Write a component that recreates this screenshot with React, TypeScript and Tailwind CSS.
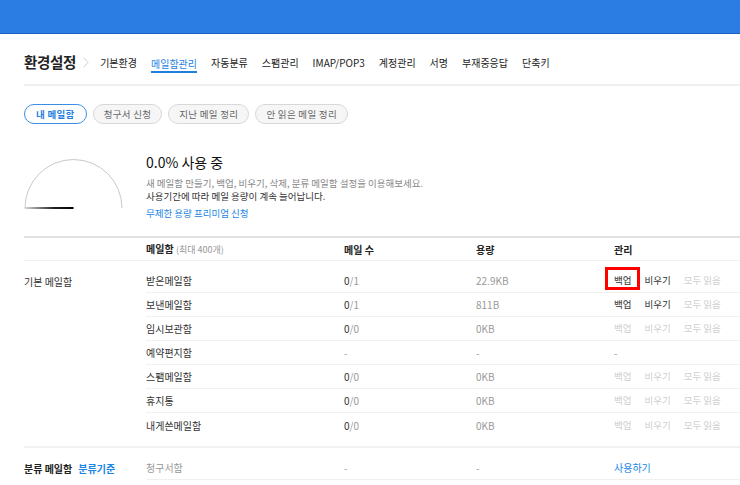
import React from 'react'

const font = { fontFamily: '"Noto Sans CJK KR", "Noto Sans", sans-serif' }

const navItems = ['기본환경', '메일함관리', '자동분류', '스팸관리', 'IMAP/POP3', '계정관리', '서명', '부재중응답', '단축키']
const pills = ['내 메일함', '청구서 신청', '지난 메일 정리', '안 읽은 메일 정리']

interface Box {
  name: string
  read: string
  total: string
  size: string
  state: 'on' | 'off' | 'none'
}

const boxes: Box[] = [
  { name: '받은메일함', read: '0', total: '/1', size: '22.9KB', state: 'on' },
  { name: '보낸메일함', read: '0', total: '/1', size: '811B', state: 'on' },
  { name: '임시보관함', read: '0', total: '/0', size: '0KB', state: 'off' },
  { name: '예약편지함', read: '-', total: '', size: '-', state: 'none' },
  { name: '스팸메일함', read: '0', total: '/0', size: '0KB', state: 'off' },
  { name: '휴지통', read: '0', total: '/0', size: '0KB', state: 'off' },
  { name: '내게쓴메일함', read: '0', total: '/0', size: '0KB', state: 'off' },
]

const Gauge = () => (
  <svg width="100" height="52" viewBox="0 0 100 52">
    <defs>
      <linearGradient id="g" x1="0" x2="1" y1="0" y2="0">
        <stop offset="0" stopColor="#d8d8d8" />
        <stop offset="0.6" stopColor="#222" />
        <stop offset="1" stopColor="#000" />
      </linearGradient>
    </defs>
    <path d="M1 50 A48.5 48.5 0 0 1 98 50" fill="none" stroke="#c9c9c9" strokeWidth="1" />
    <rect x="0.5" y="49" width="49" height="2" fill="url(#g)" />
  </svg>
)

const Actions = ({ state, highlight }: { state: Box['state']; highlight?: boolean }) => {
  if (state === 'none') return <span className="text-[#999]">-</span>
  const c = state === 'on' ? 'text-[#333]' : 'text-[#cfcfcf]'
  return (
    <div className="flex items-center gap-[13px] text-[9.5px]">
      <span className={`relative ${c}`}>
        백업
        {highlight && (
          <span className="absolute left-[-9px] top-[-6px] w-[35px] h-[23px] border-[3px] border-[#ff0000]"></span>
        )}
      </span>
      <span className={c}>비우기</span>
      <span className="text-[#cfcfcf]">모두 읽음</span>
    </div>
  )
}

export default function App() {
  return (
    <div className="w-[740px] h-[485px] bg-white overflow-hidden text-[#222]" style={font}>
      {/* top bar */}
      <div className="h-[34px] bg-[#2b7de3] border-b border-[#1c63c9]"></div>

      <div className="pl-6">
        {/* title + tabs */}
        <div className="pt-[19px] pb-[13px] border-b-2 border-[#f0f0f0]">
          <div className="flex items-center h-[18px]">
            <h1 className="text-[14.5px] font-bold tracking-[-0.3px]">환경설정</h1>
            <svg className="ml-[7px] mr-[11px]" width="6" height="11" viewBox="0 0 6 11">
              <path d="M0.5 0.5 L5 5.5 L0.5 10.5" fill="none" stroke="#d0d0d0" strokeWidth="1" />
            </svg>
            <nav className="flex items-center gap-[14px] text-[10px]">
              {navItems.map((n, i) => (
                <span
                  key={n}
                  className={i === 1 ? 'text-[#1e7fe1] border-b-2 border-[#1e7fe1] leading-[13px] pb-[1px] mt-[5px]' : 'text-[#222]'}
                >
                  {n}
                </span>
              ))}
            </nav>
          </div>
        </div>

        {/* pills */}
        <div className="flex gap-[6px] mt-[18px]">
          {pills.map((p, i) => (
            <span
              key={p}
              className={`h-[20px] px-[10px] flex items-center rounded-full text-[9.5px] tracking-[0.3px] border ${
                i === 0 ? 'border-[#3b8ee6] text-[#1f7fe0] font-bold bg-white px-[11px]' : 'border-[#d8d8d8] bg-[#f6f6f6] text-[#666]'
              }`}
            >
              {p}
            </span>
          ))}
        </div>

        {/* usage */}
        <div className="flex mt-[29px] pb-[16px] border-b-2 border-[#e2e2e2]">
          <div className="w-[122px] pt-[5px]">
            <Gauge />
          </div>
          <div>
            <p className="text-[14px] leading-[18px] text-[#111]">0.0% 사용 중</p>
            <p className="mt-[6px] text-[9.5px] leading-[13px] text-[#888]">새 메일함 만들기, 백업, 비우기, 삭제, 분류 메일함 설정을 이용해보세요.</p>
            <p className="text-[9.5px] leading-[13px] text-[#333]">사용기간에 따라 메일 용량이 계속 늘어납니다.</p>
            <p className="mt-[4px] text-[9.5px] leading-[13px] text-[#1a86e4]">무제한 용량 프리미엄 신청</p>
          </div>
        </div>

        {/* table header */}
        <div className="grid grid-cols-[122px_198px_132px_138px_1fr] h-[23px] items-center text-[10px] border-b border-[#f0f0f0]">
          <span></span>
          <span className="font-bold text-[#222]">
            메일함 <span className="font-normal text-[#999] text-[9px]">(최대 400개)</span>
          </span>
          <span className="font-bold">메일 수</span>
          <span className="font-bold">용량</span>
          <span className="font-bold">관리</span>
        </div>

        {/* default boxes */}
        <div className="flex text-[10px] pt-2 pb-[9px] border-b-2 border-[#f2f2f2]">
          <div className="w-[122px] h-[24px] flex items-center text-[#333]">기본 메일함</div>
          <div className="flex-1">
            {boxes.map((b, i) => (
              <div
                key={b.name}
                className={`grid grid-cols-[198px_132px_138px_1fr] h-[24px] items-center ${
                  i < boxes.length - 1 ? 'border-b border-[#f0f0f0]' : ''
                }`}
              >
                <span className="text-[#333]">{b.name}</span>
                <span>
                  <span className={b.read === '-' ? 'text-[#999]' : 'text-[#333]'}>{b.read}</span>
                  <span className="text-[#999]">{b.total}</span>
                </span>
                <span className="text-[#999]">{b.size}</span>
                <Actions state={b.state} highlight={i === 0} />
              </div>
            ))}
          </div>
        </div>

        {/* category boxes */}
        <div className="flex text-[10px] pt-2">
          <div className="w-[122px] h-[24px] flex items-center gap-[6px]">
            <span className="text-[#222] font-bold">분류 메일함</span>
            <span className="text-[#1a86e4] font-bold">분류기준</span>
          </div>
          <div className="flex-1 grid grid-cols-[198px_132px_138px_1fr] h-[24px] items-center border-b border-[#f0f0f0]">
            <span className="text-[#999]">청구서함</span>
            <span className="text-[#999]">-</span>
            <span className="text-[#999]">-</span>
            <span className="text-[#1a86e4]">사용하기</span>
          </div>
        </div>
      </div>
    </div>
  )
}
